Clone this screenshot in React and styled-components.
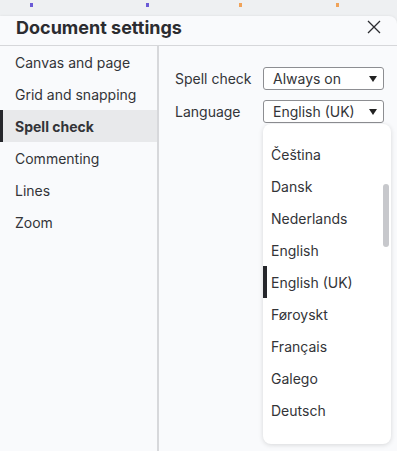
import React from 'react';
import styled, {createGlobalStyle} from "styled-components";

const Global = createGlobalStyle`
  body {
    margin: 0;
    background: #eef0f2;
    font-family: Inter, "Noto Sans", sans-serif;
    color: #333438;
  }
`;

const Page = styled.div`
  width: 397px;
  height: 451px;
  display: flex;
  flex-direction: column;
  overflow: hidden;
`;

const Canvas = styled.div`
  position: relative;
  height: 16px;
  flex-shrink: 0;
`;

const Tick = styled.span`
  position: absolute;
  top: 3px;
  width: 3px;
  height: 4px;
  background: ${p => p.color};
`;

const Panel = styled.div`
  flex: 1;
  display: flex;
  flex-direction: column;
  background: #f9fafc;
  border-radius: 0 8px 0 0;
  box-shadow: 0 0 3px rgba(0,0,0,0.08);
`;

const Header = styled.div`
  height: 30px;
  display: flex;
  align-items: center;
  justify-content: space-between;
  padding: 0 16px 7px 16px;
  box-sizing: border-box;
  border-bottom: 1px solid #d6d7da;
  flex-shrink: 0;
  h1 {
    margin: 0;
    font-size: 18px;
    font-weight: 700;
    color: #2b2c30;
  }
`;

const Close = styled.button`
  border: none;
  background: none;
  padding: 0;
  width: 14px;
  height: 14px;
  display: flex;
  cursor: pointer;
`;

const Body = styled.div`
  flex: 1;
  display: flex;
`;

const Sidebar = styled.div`
  width: 157px;
  border-right: 2px solid #d7d8db;
`;

const NavItem = styled.div`
  height: 32px;
  display: flex;
  align-items: center;
  padding-left: 15px;
  font-size: 14px;
  font-weight: ${p => p.active ? 700 : 400};
  background: ${p => p.active ? '#e8e9eb' : 'transparent'};
  box-shadow: ${p => p.active ? 'inset 3px 0 0 #26272c' : 'none'};
`;

const Content = styled.div`
  flex: 1;
  padding: 21px 0 0 16px;
  display: flex;
  flex-direction: column;
  gap: 10px;
`;

const Row = styled.div`
  display: flex;
  align-items: center;
  font-size: 14px;
`;

const Label = styled.span`
  width: 88px;
`;

const SelectWrap = styled.div`
  position: relative;
`;

const Select = styled.div`
  width: 121px;
  height: 23px;
  border: 1px solid #8d8e92;
  border-radius: 3px;
  background: #fff;
  display: flex;
  align-items: center;
  justify-content: space-between;
  padding: 0 6px 0 9px;
  box-sizing: border-box;
  font-size: 14px;
  &::after {
    content: "";
    border-left: 4px solid transparent;
    border-right: 4px solid transparent;
    border-top: 6px solid #222;
  }
`;

const Menu = styled.div`
  position: absolute;
  top: 24px;
  left: 0;
  width: 128px;
  height: 320px;
  background: #fff;
  border-radius: 8px;
  box-shadow: 0 1px 5px rgba(0,0,0,0.14);
  overflow: hidden;
  padding-top: 14px;
  box-sizing: border-box;
`;

const Option = styled.div`
  height: 32px;
  display: flex;
  align-items: center;
  padding-left: 8px;
  font-size: 14px;
  box-shadow: ${p => p.active ? 'inset 4px 0 0 #26272c' : 'none'};
`;

const Thumb = styled.div`
  position: absolute;
  right: 2px;
  top: 60px;
  width: 6px;
  height: 63px;
  border-radius: 3px;
  background: #c7c8cc;
`;

const nav = ['Canvas and page', 'Grid and snapping', 'Spell check', 'Commenting', 'Lines', 'Zoom'];
const langs = ['Čeština', 'Dansk', 'Nederlands', 'English', 'English (UK)', 'Føroyskt', 'Français', 'Galego', 'Deutsch'];

const App = () => {
    return (
        <Page>
            <Global/>
            <Canvas>
                <Tick color="#6b5bd6" style={{left: 30}}/>
                <Tick color="#6b5bd6" style={{left: 146}}/>
                <Tick color="#f0a35a" style={{left: 239}}/>
                <Tick color="#f0a35a" style={{left: 336}}/>
            </Canvas>
            <Panel>
                <Header>
                    <h1>Document settings</h1>
                    <Close>
                        <svg width="14" height="14" viewBox="0 0 14 14">
                            <path d="M1 1L13 13M13 1L1 13" stroke="#2b2c30" strokeWidth="1.3"/>
                        </svg>
                    </Close>
                </Header>
                <Body>
                    <Sidebar>
                        {nav.map(n => <NavItem key={n} active={n === 'Spell check'}>{n}</NavItem>)}
                    </Sidebar>
                    <Content>
                        <Row>
                            <Label>Spell check</Label>
                            <Select>Always on</Select>
                        </Row>
                        <Row>
                            <Label>Language</Label>
                            <SelectWrap>
                                <Select>English (UK)</Select>
                                <Menu>
                                    {langs.map(l => <Option key={l} active={l === 'English (UK)'}>{l}</Option>)}
                                    <Thumb/>
                                </Menu>
                            </SelectWrap>
                        </Row>
                    </Content>
                </Body>
            </Panel>
        </Page>
    );
};

export default App;
